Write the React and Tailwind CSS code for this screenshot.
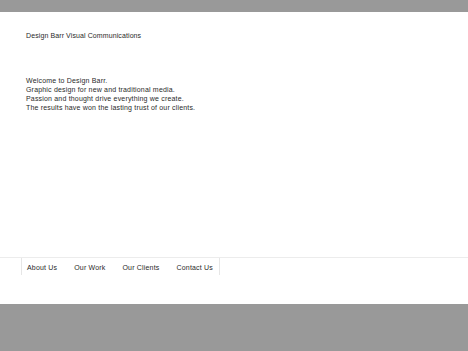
export default function App() {
  const font = { fontFamily: '"Liberation Sans", Arial, Helvetica, sans-serif' };
  return (
    <div className="w-full h-[351px] flex flex-col bg-[#999999]" style={font}>
      <div className="h-[12px] bg-[#999999]" />
      <div className="h-[292px] bg-white flex flex-col text-[7px] leading-[9px] text-[#2a2a2a]">
        <div className="pl-[26px] pt-[19px] tracking-[0.1px]">Design Barr Visual Communications</div>
        <div className="pl-[26px] mt-[36px] tracking-[0.18px]">
          <p>Welcome to Design Barr.</p>
          <p>Graphic design for new and traditional media.</p>
          <p>Passion and thought drive everything we create.</p>
          <p>The results have won the lasting trust of our clients.</p>
        </div>
        <div className="flex-1" />
        <div className="border-t border-[#ececec] h-[47px]">
          <div className="ml-[21px] inline-flex items-center h-[17px] pt-[2px] border-l border-r border-[#e6e6e6] pl-[5px] pr-[6px] gap-[17px] tracking-[0.18px]">
            <span>About Us</span>
            <span>Our Work</span>
            <span>Our Clients</span>
            <span>Contact Us</span>
          </div>
        </div>
      </div>
      <div className="flex-1 bg-[#999999]" />
    </div>
  );
}
